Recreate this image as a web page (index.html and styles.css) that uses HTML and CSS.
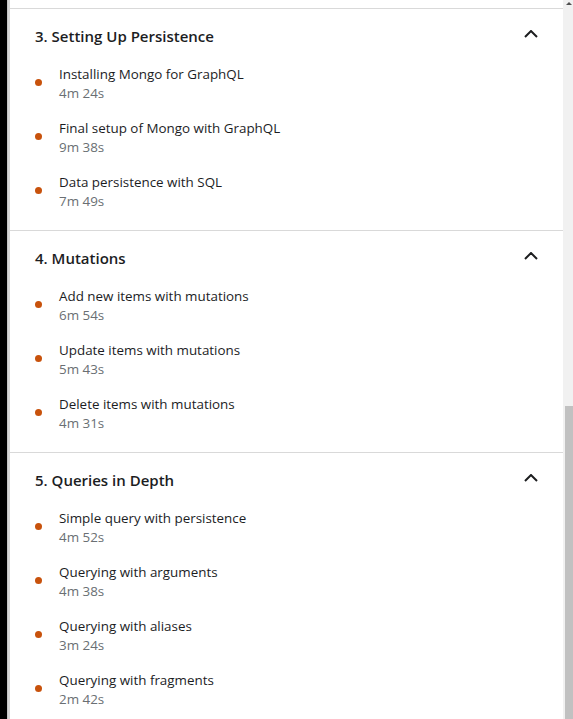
FILE: index.html
```html
<!DOCTYPE html>
<html>
<head>
<meta charset="utf-8">
<link rel="stylesheet" href="styles.css">
</head>
<body>
<div class="edge"></div>
<div class="rule"></div>
<main class="panel">
  <div class="top-space"></div>

  <section class="section">
    <div class="sec-head">
      <h3 class="sec-title">3. Setting Up Persistence</h3>
      <svg class="chev" width="14" height="8" viewBox="0 0 14 8"><polyline points="1,7 7,1 13,7" fill="none" stroke="#1c1d1f" stroke-width="2"/></svg>
    </div>
    <ul class="items">
      <li class="item"><span class="dot"></span><div class="txt"><div class="name">Installing Mongo for GraphQL</div><div class="dur">4m 24s</div></div></li>
      <li class="item"><span class="dot"></span><div class="txt"><div class="name">Final setup of Mongo with GraphQL</div><div class="dur">9m 38s</div></div></li>
      <li class="item"><span class="dot"></span><div class="txt"><div class="name">Data persistence with SQL</div><div class="dur">7m 49s</div></div></li>
    </ul>
  </section>

  <section class="section">
    <div class="sec-head">
      <h3 class="sec-title">4. Mutations</h3>
      <svg class="chev" width="14" height="8" viewBox="0 0 14 8"><polyline points="1,7 7,1 13,7" fill="none" stroke="#1c1d1f" stroke-width="2"/></svg>
    </div>
    <ul class="items">
      <li class="item"><span class="dot"></span><div class="txt"><div class="name">Add new items with mutations</div><div class="dur">6m 54s</div></div></li>
      <li class="item"><span class="dot"></span><div class="txt"><div class="name">Update items with mutations</div><div class="dur">5m 43s</div></div></li>
      <li class="item"><span class="dot"></span><div class="txt"><div class="name">Delete items with mutations</div><div class="dur">4m 31s</div></div></li>
    </ul>
  </section>

  <section class="section">
    <div class="sec-head">
      <h3 class="sec-title">5. Queries in Depth</h3>
      <svg class="chev" width="14" height="8" viewBox="0 0 14 8"><polyline points="1,7 7,1 13,7" fill="none" stroke="#1c1d1f" stroke-width="2"/></svg>
    </div>
    <ul class="items">
      <li class="item"><span class="dot"></span><div class="txt"><div class="name">Simple query with persistence</div><div class="dur">4m 52s</div></div></li>
      <li class="item"><span class="dot"></span><div class="txt"><div class="name">Querying with arguments</div><div class="dur">4m 38s</div></div></li>
      <li class="item"><span class="dot"></span><div class="txt"><div class="name">Querying with aliases</div><div class="dur">3m 24s</div></div></li>
      <li class="item"><span class="dot"></span><div class="txt"><div class="name">Querying with fragments</div><div class="dur">2m 42s</div></div></li>
    </ul>
  </section>
</main>
<div class="scrollbar">
  <div class="arrow"></div>
  <div class="thumb"></div>
</div>
</body>
</html>
```
FILE: styles.css
```css
html, body {
  margin: 0;
  padding: 0;
  height: 719px;
  overflow: hidden;
  background: #fff;
}
body {
  display: flex;
  font-family: "Open Sans", "Noto Sans", sans-serif;
  color: #1c1d1f;
}
.edge {
  width: 7px;
  background: #000;
  flex: none;
}
.rule {
  width: 3px;
  flex: none;
  background: #d6d6d6;
  border-left: 1px solid #c4c4c4;
  box-sizing: border-box;
}
.panel {
  flex: 1;
  min-width: 0;
}
.top-space {
  height: 8px;
}
.section {
  border-top: 1px solid #d9d9d9;
  padding: 16px 25px 19px 25px;
}
.sec-head {
  display: flex;
  align-items: center;
  justify-content: space-between;
  height: 22px;
}
.sec-title {
  margin: 0;
  font-size: 15px;
  font-weight: 600;
  line-height: 22px;
}
.chev {
  display: block;
  margin-top: -4px;
}
.items {
  list-style: none;
  margin: 18px 0 0 0;
  padding: 0;
  display: flex;
  flex-direction: column;
  gap: 16px;
}
.item {
  display: flex;
  align-items: center;
  gap: 17px;
}
.dot {
  width: 7px;
  height: 7px;
  border-radius: 50%;
  background: #c8520c;
  flex: none;
  margin-top: -3px;
}
.name, .dur {
  font-size: 13.4px;
  line-height: 19px;
}
.dur {
  color: #6a6f73;
}
.scrollbar {
  width: 10px;
  flex: none;
  background: #f1f1f1;
  display: flex;
  flex-direction: column;
  align-items: flex-end;
}
.arrow {
  width: 0;
  height: 0;
  border-left: 3px solid transparent;
  border-right: 3px solid transparent;
  border-bottom: 3px solid #505050;
  margin: 2px 1px 0 0;
}
.thumb {
  width: 8px;
  margin-top: 401px;
  flex: 1;
  background: #c1c1c1;
}
```
